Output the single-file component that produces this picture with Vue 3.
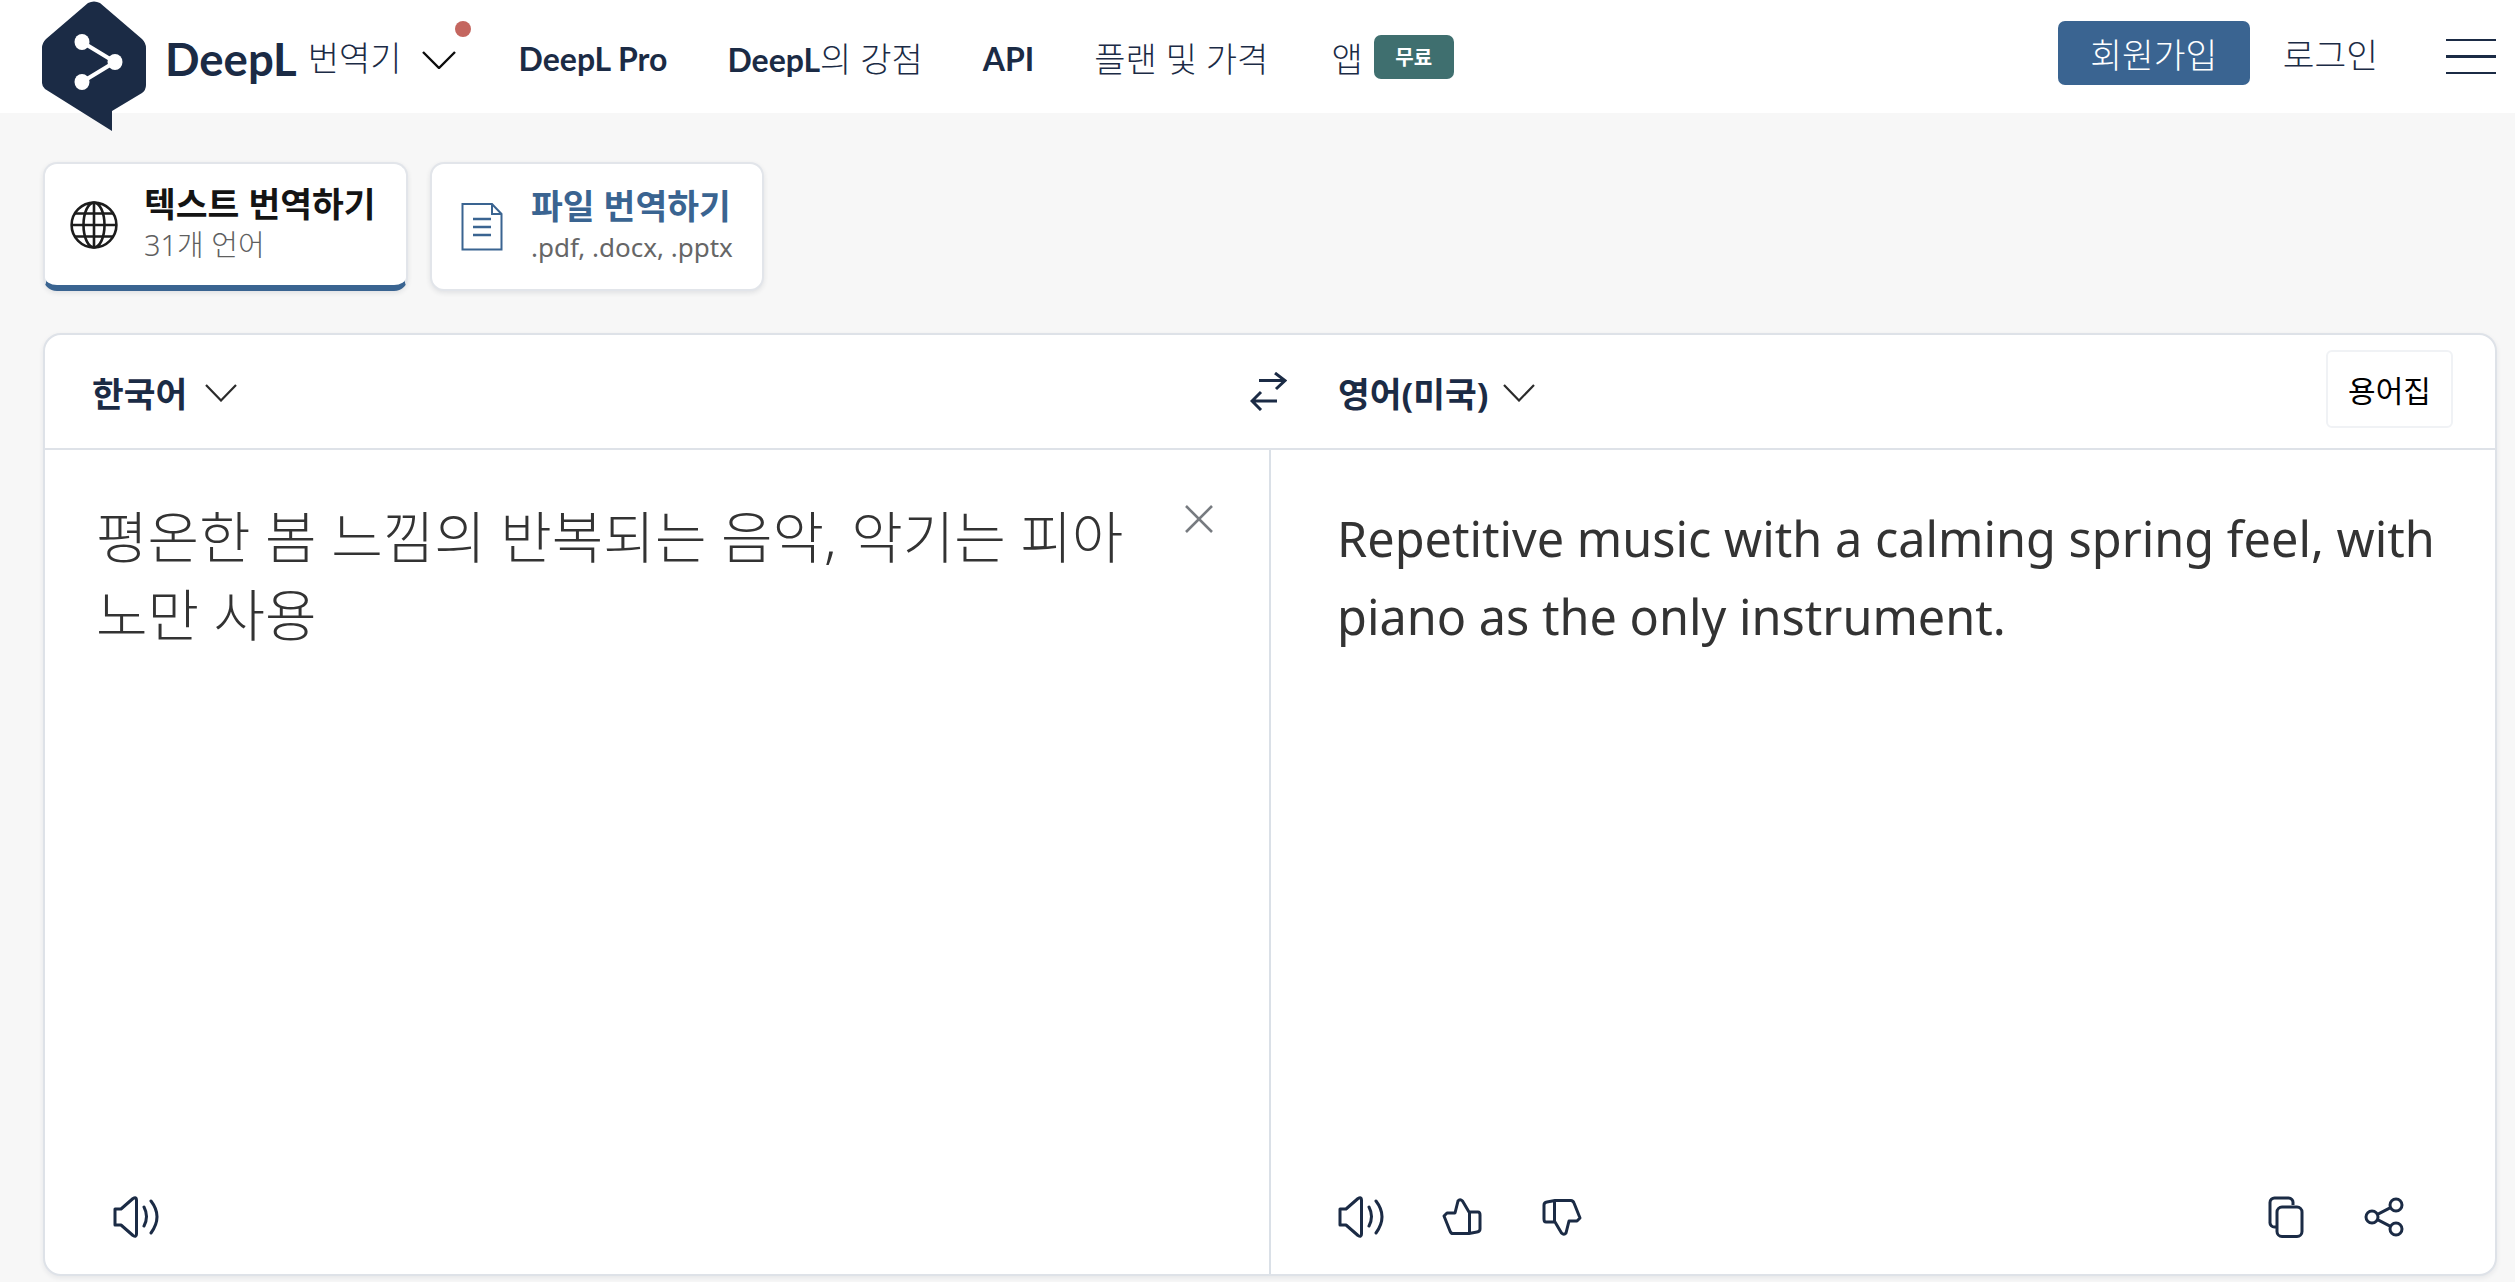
<script setup>
const navItems = [
  { strong: 'DeepL Pro', light: '' },
  { strong: 'DeepL', light: '의 강점' },
  { strong: 'API', light: '' },
  { strong: '', light: '플랜 및 가격' },
]
</script>

<template>
  <div class="page">
    <header class="topbar">
      <svg class="logo" viewBox="0 0 104 130" width="104" height="130">
        <path d="M46 2 Q52 -1 58 2 L100 38 Q104 42 104 47 V84 Q104 89 100 92 L70 110 V130 L3 88 Q0 85 0 82 V47 Q0 42 4 38 Z" fill="#1b2b45"/>
        <path d="M40 41 L73 61 L40 81" fill="none" stroke="#fff" stroke-width="4"/>
        <ellipse cx="40" cy="41" rx="7.5" ry="8" fill="#fff"/>
        <ellipse cx="73" cy="61" rx="7.5" ry="8" fill="#fff"/>
        <ellipse cx="40" cy="81" rx="7.5" ry="8" fill="#fff"/>
      </svg>
      <span class="brand">DeepL</span>
      <span class="brand-sub">번역기</span>
      <span class="brand-menu">
        <svg width="34" height="18" viewBox="0 0 34 18"><path d="M1 1 L17 17 L33 1" fill="none" stroke="#0c0c0c" stroke-width="2.4"/></svg>
        <i class="dot"></i>
      </span>
      <nav class="nav">
        <a v-for="n in navItems" :key="n.strong + n.light"><b class="strong">{{ n.strong }}</b>{{ n.light }}</a>
        <a class="app">앱 <span class="badge">무료</span></a>
      </nav>
      <button class="signup">회원가입</button>
      <a class="login">로그인</a>
      <div class="burger"><i></i><i></i><i></i></div>
    </header>

    <main class="content">
      <div class="tabs">
        <div class="tab active">
          <svg class="tab-icon" width="48" height="48" viewBox="0 0 48 48" fill="none" stroke="#1c1c1c" stroke-width="2.6">
            <circle cx="24" cy="24" r="22.4"/>
            <ellipse cx="24" cy="24" rx="10.5" ry="22.4"/>
            <path d="M24 1.6 V46.4 M1.6 24 H46.4 M5 12.5 H43 M5 35.5 H43"/>
          </svg>
          <div>
            <div class="tab-title">텍스트 번역하기</div>
            <div class="tab-sub">31개 언어</div>
          </div>
        </div>
        <div class="tab file">
          <svg class="tab-icon" width="42" height="48" viewBox="0 0 42 48" fill="none" stroke="#3a6491" stroke-width="2">
            <path d="M1.5 1 H31 L40.5 11 V46.5 H1.5 Z M31 1 V11 H40.5"/>
            <path d="M12 16 H30 M12 24 H30 M12 32 H30" stroke-width="2.4"/>
          </svg>
          <div>
            <div class="tab-title blue">파일 번역하기</div>
            <div class="tab-sub latin">.pdf, .docx, .pptx</div>
          </div>
        </div>
      </div>

      <section class="panel">
        <div class="panel-head">
          <div class="head-left">
            <span class="lang">한국어</span>
            <svg class="chev" width="32" height="18" viewBox="0 0 32 18"><path d="M1 1 L16 16.5 L31 1" fill="none" stroke="#2b2b2b" stroke-width="2.2"/></svg>
            <svg class="swap" width="37" height="39" viewBox="0 0 37 39" fill="none" stroke="#1b2b45" stroke-width="3">
              <path d="M9 8.5 H35 M25 1 L35 8.5 L26 17 M27 29 H2 M11 20 L2 29 L11 38"/>
            </svg>
          </div>
          <div class="head-right">
            <span class="lang">영어(미국)</span>
            <svg class="chev" width="32" height="18" viewBox="0 0 32 18"><path d="M1 1 L16 16.5 L31 1" fill="none" stroke="#2b2b2b" stroke-width="2.2"/></svg>
            <button class="glossary">용어집</button>
          </div>
        </div>
        <div class="panel-body">
          <div class="pane left">
            <div class="source-row">
              <p class="source">평온한 봄 느낌의 반복되는 음악, 악기는 피아노만 사용</p>
              <svg class="close" width="30" height="28" viewBox="0 0 30 28"><path d="M2 1 L28 27 M28 1 L2 27" stroke="#777b80" stroke-width="2.6" fill="none"/></svg>
            </div>
            <div class="tools">
              <svg width="48" height="42" viewBox="0 0 48 42" fill="none" stroke="#1b2b45" stroke-width="3" stroke-linecap="round" stroke-linejoin="round">
                <path d="M2 13 H8 L20 2.5 Q23.5 0.5 23.5 4 V38 Q23.5 41.5 20 39.5 L8 29 H2 Z"/>
                <path d="M31 11 Q36 20.5 31 30 M38 5 Q50 20.5 38 37"/>
              </svg>
            </div>
          </div>
          <div class="pane right">
            <p class="target">Repetitive music with a calming spring feel, with piano as the only instrument.</p>
            <div class="tools">
              <svg width="48" height="42" viewBox="0 0 48 42" fill="none" stroke="#1b2b45" stroke-width="3" stroke-linecap="round" stroke-linejoin="round">
                <path d="M2 13 H8 L20 2.5 Q23.5 0.5 23.5 4 V38 Q23.5 41.5 20 39.5 L8 29 H2 Z"/>
                <path d="M31 11 Q36 20.5 31 30 M38 5 Q50 20.5 38 37"/>
              </svg>
              <svg class="up" width="40" height="38" viewBox="0 0 40 38" fill="none" stroke="#1b2b45" stroke-width="3" stroke-linejoin="round">
                <path d="M2 18 L5 15 H13 L16 3 Q18 0.5 20.5 3 L27 14 H36 Q38 14 38 17 V31 Q38 33.5 35 34 L27 35.5 H12 Q9 36 8 33 Z M27.5 14 V35"/>
              </svg>
              <svg class="down" width="40" height="38" viewBox="0 0 40 38" fill="none" stroke="#1b2b45" stroke-width="3" stroke-linejoin="round">
                <path transform="rotate(180 20 19)" d="M2 18 L5 15 H13 L16 3 Q18 0.5 20.5 3 L27 14 H36 Q38 14 38 17 V31 Q38 33.5 35 34 L27 35.5 H12 Q9 36 8 33 Z M27.5 14 V35"/>
              </svg>
              <span class="spacer"></span>
              <svg width="36" height="42" viewBox="0 0 36 42" fill="none" stroke="#1b2b45" stroke-width="3">
                <path d="M25 9 V7 A4.5 4.5 0 0 0 20.5 2 H7 A4.5 4.5 0 0 0 2 6.5 V26 A4.5 4.5 0 0 0 7 31 H9"/>
                <rect x="9" y="11" width="25" height="29.5" rx="5"/>
              </svg>
              <svg class="share" width="40" height="40" viewBox="0 0 40 40" fill="none" stroke="#1b2b45" stroke-width="3">
                <circle cx="8" cy="20" r="6"/>
                <circle cx="32" cy="8" r="6"/>
                <circle cx="32" cy="32" r="6"/>
                <path d="M13.5 17.3 L26.5 10.7 M13.5 22.7 L26.5 29.3"/>
              </svg>
            </div>
          </div>
        </div>
      </section>
    </main>
  </div>
</template>

<style>
html, body { margin: 0; background: #f7f7f7; }
</style>

<style scoped>
.page {
  width: 2515px;
  height: 1282px;
  overflow: hidden;
  background: #f7f7f7;
  font-family: "Noto Sans", "Noto Sans CJK KR", sans-serif;
  color: #1b2b45;
}
.topbar {
  height: 113px;
  background: #fff;
  display: flex;
  align-items: center;
  padding-left: 42px;
  box-sizing: border-box;
}
.logo {
  align-self: flex-start;
  margin-top: 1px;
  flex: none;
  position: relative;
  z-index: 1;
}
.brand {
  margin-left: 19px;
  font-family: Lato, "Noto Sans CJK KR", sans-serif;
  font-weight: 700;
  font-size: 45.5px;
  margin-top: 4px;
}
.brand-sub {
  margin-left: 11px;
  font-size: 34px;
  font-weight: 300;
  margin-top: 0;
}
.brand-menu {
  position: relative;
  margin-left: 20px;
  display: flex;
  margin-top: 6px;
}
.dot {
  position: absolute;
  left: 33px;
  top: -30px;
  width: 16px;
  height: 16px;
  border-radius: 50%;
  background: #c4665f;
}
.nav {
  display: flex;
  align-items: center;
  gap: 60px;
  margin-left: 63px;
  font-size: 34px;
  font-weight: 300;
  margin-top: 2px;
  flex: 1;
}
.nav a { white-space: nowrap; }
.nav .strong {
  font-family: Lato, "Noto Sans CJK KR", sans-serif;
  font-size: 32px;
  font-weight: 700;
}
.app { display: flex; align-items: center; gap: 11px; margin-left: 3px; }
.badge {
  width: 80px;
  height: 44px;
  background: #3f6f6f;
  color: #fff;
  font-size: 20px;
  font-weight: 700;
  border-radius: 7px;
  display: flex;
  align-items: center;
  justify-content: center;
  margin-top: -2px;
}
.signup {
  width: 192px;
  height: 64px;
  margin-bottom: 7px;
  border: 0;
  border-radius: 7px;
  background: #3a6491;
  color: #fff;
  font: 300 34.5px "Noto Sans CJK KR", sans-serif;
}
.login {
  margin-left: 33px;
  font-size: 34.5px;
  font-weight: 300;
  margin-bottom: 7px;
  white-space: nowrap;
}
.burger {
  margin-left: 68px;
  width: 50px;
  display: flex;
  flex-direction: column;
  gap: 14px;
  margin-right: 19px;
}
.burger i {
  display: block;
  height: 2.5px;
  background: #1b2b45;
}
.content {
  padding: 49px 18px 0 43px;
}
.tabs {
  display: flex;
  gap: 22px;
}
.tab {
  height: 129px;
  box-sizing: border-box;
  background: #fff;
  border: 2px solid #e2e5ea;
  border-radius: 14px;
  box-shadow: 0 2px 5px rgba(30, 40, 60, .1);
  display: flex;
  align-items: center;
}
.tab.active {
  width: 365px;
  padding-left: 25px;
  gap: 26px;
  border-bottom: 6px solid #3a6491;
}
.tab.file { width: 334px; padding-left: 29px; gap: 28px; }
.tab-icon { flex: none; }
.tab-title {
  font-size: 34.6px;
  font-weight: 700;
  color: #141414;
  line-height: 44px;
  white-space: nowrap;
  margin-top: -3px;
}
.tab-title.blue { color: #3a6491; }
.tab-sub {
  font-size: 29px;
  font-weight: 300;
  color: #5f5f5f;
  line-height: 38px;
  white-space: nowrap;
}
.tab-sub.latin { font-size: 26px; font-weight: 400; color: #666; }
.panel {
  margin-top: 42px;
  height: 943px;
  box-sizing: border-box;
  background: #fff;
  border: 2px solid #dee2e8;
  border-radius: 18px;
  box-shadow: 0 2px 5px rgba(30, 40, 60, .08);
  display: flex;
  flex-direction: column;
}
.panel-head {
  height: 113px;
  flex: none;
  display: flex;
  border-bottom: 2px solid #dee2e8;
}
.head-left, .head-right {
  display: flex;
  align-items: center;
  flex: none;
  box-sizing: border-box;
}
.head-left { width: 1224px; padding-left: 47px; position: relative; }
.head-right { flex: 1; padding-left: 69px; }
.chev { margin-top: 2px; }
.head-left .chev { margin-left: 18px; }
.head-right .chev { margin-left: 15px; }
.swap { position: absolute; left: 1205px; top: 37px; }
.lang {
  font-size: 34.5px;
  font-weight: 700;
  color: #1b2b45;
  white-space: nowrap;
}
.glossary {
  margin-left: auto;
  margin-right: 42px;
  width: 127px;
  height: 78px;
  background: #fff;
  border: 2px solid #f0f2f5;
  border-radius: 6px;
  font: 400 30px "Noto Sans CJK KR", sans-serif;
  color: #000;
  padding: 0;
  margin-top: -6px;
}
.panel-body {
  flex: 1;
  display: flex;
  min-height: 0;
}
.pane {
  display: flex;
  flex-direction: column;
  justify-content: space-between;
  box-sizing: border-box;
}
.pane.left { width: 1224px; padding: 47px 0 36px 51px; }
.pane.right { flex: 1; border-left: 2px solid #dae0e7; padding: 49px 0 36px 66px; }
.source-row { display: flex; align-items: flex-start; }
.source {
  margin: 0;
  width: 1055px;
  font-size: 56px;
  font-weight: 300;
  line-height: 78px;
  color: #333;
  word-break: break-all;
}
.close { margin-left: 33px; margin-top: 8px; flex: none; }
.target {
  margin: 0;
  font-size: 48.6px;
  line-height: 78px;
  color: #333;
  width: 1130px;
}
.tools {
  display: flex;
  align-items: center;
  height: 42px;
}
.pane.left .tools { margin-left: 17px; }
.pane.right .tools { margin-left: 1px; }
.up { margin-left: 56px; }
.down { margin-left: 60px; }
.spacer { flex: 1; }
.share { margin-left: 60px; margin-right: 91px; }
</style>
